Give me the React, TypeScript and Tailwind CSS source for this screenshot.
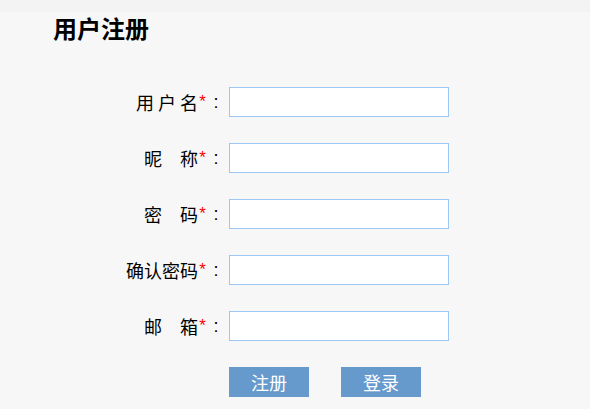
import { useState } from "react";

type Field = {
  name: string;
  label: string;
  type: string;
};

const fields: Field[] = [
  { name: "username", label: "用 户 名", type: "text" },
  { name: "nickname", label: "昵　称", type: "text" },
  { name: "password", label: "密　码", type: "password" },
  { name: "confirm", label: "确认密码", type: "password" },
  { name: "email", label: "邮　箱", type: "email" },
];

const cjk = "font-['Noto_Sans_CJK_SC','Noto_Sans',sans-serif]";

export default function App() {
  const [values, setValues] = useState<Record<string, string>>({});

  return (
    <div className={`min-h-screen bg-[#f3f3f3] pt-[12px] text-black ${cjk}`}>
      <div className="min-h-[397px] bg-[#f7f7f7] pb-[12px]">
        <h1 className="pl-[53px] pt-[4px] text-[24px] font-bold leading-[24px]">用户注册</h1>

        <form className="mt-[47px] flex flex-col gap-[26px]" onSubmit={(e) => e.preventDefault()}>
          {fields.map((field) => (
            <div className="flex h-[30px] items-center" key={field.name}>
              <label
                className="flex w-[225px] items-center justify-end whitespace-pre text-[18px] leading-[30px]"
                htmlFor={field.name}
              >
                <span>{field.label}</span>
                <span className="w-[9px] text-center font-['Liberation_Sans',sans-serif] text-[17px] text-[#ff0000]">
                  *
                </span>
                <span className="w-[18px] text-center font-['Liberation_Sans',sans-serif]">:</span>
              </label>
              <input
                className="ml-[4px] h-[30px] w-[220px] border border-[#9cc8f4] bg-white px-2 text-[14px] outline-none"
                id={field.name}
                onChange={(e) => setValues({ ...values, [field.name]: e.target.value })}
                type={field.type}
                value={values[field.name] ?? ""}
              />
            </div>
          ))}

          <div className="flex gap-[32px] pl-[229px]">
            <button className="h-[30px] w-[80px] bg-[#6699cc] text-[18px] leading-[30px] text-white" type="submit">
              注册
            </button>
            <button className="h-[30px] w-[80px] bg-[#6699cc] text-[18px] leading-[30px] text-white" type="button">
              登录
            </button>
          </div>
        </form>
      </div>
    </div>
  );
}
